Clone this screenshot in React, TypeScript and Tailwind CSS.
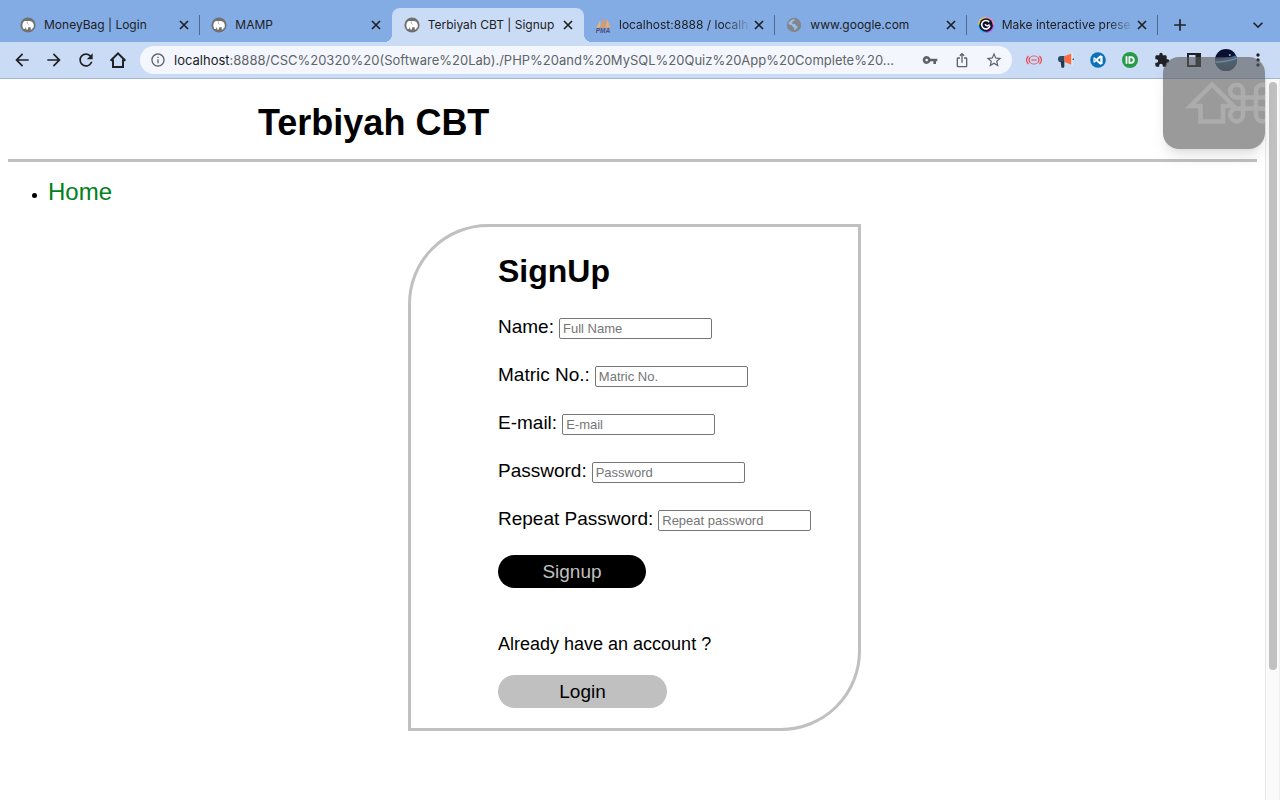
import type { ReactNode } from 'react';
import {
  MdAdd,
  MdArrowBack,
  MdArrowForward,
  MdExpandMore,
  MdExtension,
  MdInfoOutline,
  MdIosShare,
  MdMoreVert,
  MdRefresh,
  MdStarBorder,
  MdVpnKey,
} from 'react-icons/md';

function ElephantIcon() {
  return (
    <svg viewBox="0 0 16 16" className="size-4 shrink-0" aria-hidden="true">
      <circle cx="8" cy="8" r="7.600" fill="#707070" />
      <path
        d="M3.500 12C2.200 10.500 1.900 7 3.200 5.200 4.200 3.800 6 3.700 7.200 4.300c1.500-.7 3.600-.5 4.900.5 1.600 1.300 2 3.500 1.500 5.400-.2.900-.9 1-1 .2-.2.600-.3 1.200-.3 2h-1.600c0-1 0-1.800-.3-2.300-.6.300-1.500.3-2.100.1-.3.500-.3 1.200-.3 2.200H6.200c0-.9-.1-1.800-.5-2.500-.4.500-.5 1.200-.6 2.100z"
        fill="#fff"
      />
      <path d="M7.300 4.600c-.1 1.200.3 2.300 1.200 2.900" fill="none" stroke="#8a8a8a" strokeWidth=".7" />
    </svg>
  );
}

function SailIcon() {
  return (
    <svg viewBox="0 0 16 16" className="size-4 shrink-0" aria-hidden="true">
      <path d="M1 10.500C3 8.500 4.500 5.500 5 2.500c.6 3 .5 6-.2 8z" fill="#f7b56b" />
      <path d="M5.600 10.500C7.500 7.500 8.600 4 8.800.600c1.400 3.200 1.500 7 .6 9.900z" fill="#f9943a" />
      <path d="M10.300 10.500c1-2 1.400-4.900 1.100-8.500 2 2.800 3.200 5.700 3.600 8.500z" fill="#f9a660" />
      <text x="8" y="15.500" fontSize="6.500" fontWeight="700" fontStyle="italic" textAnchor="middle" fill="#4b4f78" fontFamily="Liberation Sans, sans-serif">
        PMA
      </text>
    </svg>
  );
}

function GlobeIcon() {
  return (
    <svg viewBox="0 0 16 16" className="size-4 shrink-0" aria-hidden="true">
      <circle cx="8" cy="8" r="7.200" fill="#80868b" />
      <path
        d="M8.500 2.200c.3 1.200-.2 1.800-1.400 2-.6.100-.5 1-.9 1.300-.7.400-.3 1.200.5 1.300 1.400.1 2.600.1 2.900 1.300.3.900 1.300.6 1.800 1.300.4.600-.2 1.500-.8 2-.9.700-1.300 1.600-2.300 1.900-.4-.9.200-1.900-.3-2.600-.8-.5-1.300-1-1.700-2C5.500 8 4 7.700 2.400 7.200 2.700 4.500 5.500 2.200 8.500 2.200z"
        fill="#9cbbe6"
      />
    </svg>
  );
}

function PresentIcon() {
  return (
    <svg viewBox="0 0 16 16" className="size-4 shrink-0" aria-hidden="true">
      <path d="M8 0a8 8 0 0 1 8 8H8z" fill="#f58ab0" />
      <path d="M16 8a8 8 0 0 1-8 8V8z" fill="#c04de0" />
      <path d="M8 16a8 8 0 0 1-8-8h8z" fill="#35b6f2" />
      <path d="M0 8a8 8 0 0 1 8-8v8z" fill="#f0c64a" />
      <circle cx="8" cy="8" r="6.800" fill="#101330" />
      <path d="M11.200 5.100A4.200 4.200 0 1 0 12 8.600" fill="none" stroke="#fff" strokeWidth="1.600" />
      <path d="M7.200 7.200c.4 2 3 2.300 4.300.3" fill="none" stroke="#fff" strokeWidth="1.500" />
    </svg>
  );
}

function CloseIcon() {
  return (
    <svg viewBox="0 0 10 10" className="size-2.5" fill="none" stroke="#202124" strokeWidth="1.700" aria-hidden="true">
      <path d="M1 1l8 8M9 1 1 9" />
    </svg>
  );
}

function HomeIcon() {
  return (
    <svg viewBox="0 0 20 20" className="size-5" fill="none" stroke="#202124" strokeWidth="2" aria-hidden="true">
      <path d="M2.600 10.700 10 3.300l7.400 7.400M5 9.500V17h10V9.500" />
    </svg>
  );
}

function BroadcastIcon() {
  return (
    <svg viewBox="0 0 16 16" className="size-4" fill="none" stroke="#e8454f" strokeLinecap="round" aria-hidden="true">
      <path d="M2.200 4.300c-2 2.200-2 5.200 0 7.400M13.800 4.300c2 2.200 2 5.200 0 7.400M4 5.700c-1.200 1.400-1.200 3.200 0 4.600M12 5.700c1.200 1.400 1.200 3.200 0 4.600" strokeWidth="1.200" />
      <path d="M5 4.700c1.900-1.100 4.100-1.100 6 0M5 11.300c1.900 1.100 4.100 1.100 6 0" strokeWidth=".8" />
      <path d="M5.600 8h4.800" strokeWidth="1.600" strokeDasharray="1.200 .6" strokeLinecap="butt" />
    </svg>
  );
}

function MegaphoneIcon() {
  return (
    <svg viewBox="0 0 16 16" className="size-4" aria-hidden="true">
      <path d="M0 7.200C0 5 1 4 3 4h3.500v6H3C1 10 0 9.200 0 7.200z" fill="#2f4a63" />
      <path d="M2.500 9h3.800v5.500c0 1-.6 1.300-1.400 1.300H3.500z" fill="#22384d" />
      <path d="M6.500 4 13.500 1.500v11.300L6.500 10z" fill="#ff6b3d" />
      <path d="M13.500.800h1.100v12.800h-1.100z" fill="#e9eef2" />
      <circle cx="15.200" cy="7.200" r=".8" fill="#22384d" />
    </svg>
  );
}

function CodeIcon() {
  return (
    <svg viewBox="0 0 16 16" className="size-4" aria-hidden="true">
      <circle cx="8" cy="8" r="7.800" fill="#0b72b9" />
      <path d="M10.300 3.200 12.600 4.200v7.600l-2.300 1L6.200 9.300 4.400 10.700l-1-.5V5.800l1-.5 1.800 1.400zM10.300 5.900 7.700 8l2.600 2.100zM4.500 6.900v2.200L5.500 8z" fill="#fff" fillRule="evenodd" />
    </svg>
  );
}

function GreenIcon() {
  return (
    <svg viewBox="0 0 16 16" className="size-4" aria-hidden="true">
      <circle cx="8" cy="8" r="8" fill="#259b48" />
      <path d="M4.500 4.200v7.600" stroke="#fff" strokeWidth="1.800" />
      <path d="M7.400 5.100h1.500a2.900 2.900 0 0 1 0 5.800H7.400z" fill="none" stroke="#fff" strokeWidth="1.800" />
    </svg>
  );
}

function SidePanelIcon() {
  return (
    <svg viewBox="0 0 14 14" className="size-3.5" aria-hidden="true">
      <path d="M0 0h14v14H0zM2 2v10h6.500V2z" fill="#202124" fillRule="evenodd" />
    </svg>
  );
}

function AvatarIcon() {
  return (
    <svg viewBox="0 0 22 22" className="size-[22px]" aria-hidden="true">
      <defs>
        <clipPath id="avatar-clip">
          <circle cx="11" cy="11" r="11" />
        </clipPath>
        <linearGradient id="avatar-sea" x1="0" y1="0" x2="0" y2="1">
          <stop offset="0" stopColor="#2f77b5" />
          <stop offset="1" stopColor="#3d5468" />
        </linearGradient>
      </defs>
      <g clipPath="url(#avatar-clip)">
        <path d="M0 0h22v22H0z" fill="#0a1030" />
        <path d="M0 9.500C8 10 15 8.500 22 6v16H0z" fill="url(#avatar-sea)" />
        <path d="M0 12.500C8 12.500 15 11 22 8.500v1.200C15 12.500 8 13.700 0 13.700z" fill="#b5dcf0" />
        <circle cx="14.800" cy="6" r="1" fill="#8db8e8" />
      </g>
    </svg>
  );
}

interface TabProps {
  title: string;
  icon: ReactNode;
  active?: boolean;
  divider?: boolean;
  fade?: boolean;
}

function Tab({ title, icon, active, divider, fade }: TabProps) {
  return (
    <div
      className={
        active
          ? 'relative flex min-w-0 flex-1 items-center rounded-t-lg bg-[#cadbf5] pr-2 pl-3'
          : 'relative flex min-w-0 flex-1 items-center pr-2 pl-[11px]'
      }
    >
      {active && (
        <>
          <span className="absolute bottom-0 -left-2 size-2 bg-[radial-gradient(circle_at_0_0,transparent_8px,#cadbf5_8px)]" />
          <span className="absolute -right-2 bottom-0 size-2 bg-[radial-gradient(circle_at_100%_0,transparent_8px,#cadbf5_8px)]" />
        </>
      )}
      {icon}
      <span
        className={
          fade
            ? 'ml-2 min-w-0 flex-1 overflow-hidden mask-r-from-80% text-xs whitespace-nowrap'
            : 'ml-2 min-w-0 flex-1 text-xs whitespace-nowrap'
        }
      >
        {title}
      </span>
      <button type="button" aria-label={`Close ${title}`} className="flex size-4 shrink-0 items-center justify-center">
        <CloseIcon />
      </button>
      {divider && <span className="absolute top-[7px] right-0 h-5 w-px bg-[#4f6a91]" />}
    </div>
  );
}

function ToolButton({ label, children }: { label: string; children: ReactNode }) {
  return (
    <button type="button" aria-label={label} className="flex h-7 w-8 shrink-0 items-center justify-center">
      {children}
    </button>
  );
}

function Field({ id, label, placeholder, type }: { id: string; label: string; placeholder: string; type: string }) {
  return (
    <div className="flex h-6 items-baseline gap-[5px] text-[19px] leading-6">
      <label htmlFor={id} className="whitespace-nowrap">
        {label}
      </label>
      <input
        id={id}
        type={type}
        placeholder={placeholder}
        className="h-[21px] w-[153px] rounded-xs border border-[#767676] bg-white px-[3px] text-[13px] leading-4 placeholder:text-[#757575]"
      />
    </div>
  );
}

export default function App() {
  return (
    <div className="relative flex min-h-screen flex-col overflow-hidden bg-white text-black">
      <header className="font-[Inter,sans-serif] text-[#202124]">
        <div className="flex h-[42px] bg-[#83ace5] pt-2">
          <div className="flex min-w-0 flex-1 pl-[9px]">
            <Tab title="MoneyBag | Login" icon={<ElephantIcon />} divider />
            <Tab title="MAMP" icon={<ElephantIcon />} />
            <Tab title="Terbiyah CBT | Signup" icon={<ElephantIcon />} active />
            <Tab title="localhost:8888 / localh" icon={<SailIcon />} divider fade />
            <Tab title="www.google.com" icon={<GlobeIcon />} divider />
            <Tab title="Make interactive prese" icon={<PresentIcon />} divider fade />
          </div>
          <div className="flex w-[122px] items-center justify-between px-3">
            <button type="button" aria-label="New tab">
              <MdAdd className="size-5" />
            </button>
            <button type="button" aria-label="Search tabs">
              <MdExpandMore className="size-5" />
            </button>
          </div>
        </div>

        <div className="flex h-[37px] items-center border-b border-[#a3b4d4] bg-[#cadbf5] px-1.5">
          <ToolButton label="Back">
            <MdArrowBack className="size-5" />
          </ToolButton>
          <ToolButton label="Forward">
            <MdArrowForward className="size-5" />
          </ToolButton>
          <ToolButton label="Reload">
            <MdRefresh className="size-5" />
          </ToolButton>
          <ToolButton label="Home page">
            <HomeIcon />
          </ToolButton>
          <div className="mx-1.5 flex h-7 min-w-0 flex-1 items-center rounded-full bg-[#f3f7fd] px-0.5 text-[#5f6368]">
            <ToolButton label="Site information">
              <MdInfoOutline className="size-4" />
            </ToolButton>
            <span className="min-w-0 flex-1 overflow-hidden text-[13px] leading-5 whitespace-nowrap">
              <span className="text-[#202124]">localhost</span>
              :8888/CSC%20320%20(Software%20Lab)./PHP%20and%20MySQL%20Quiz%20App%20Complete%20...
            </span>
            <ToolButton label="Saved passwords">
              <MdVpnKey className="size-4" />
            </ToolButton>
            <ToolButton label="Share">
              <MdIosShare className="size-4" />
            </ToolButton>
            <ToolButton label="Bookmark">
              <MdStarBorder className="size-[18px]" />
            </ToolButton>
          </div>
          <ToolButton label="Broadcast">
            <BroadcastIcon />
          </ToolButton>
          <ToolButton label="Announcements">
            <MegaphoneIcon />
          </ToolButton>
          <ToolButton label="Code editor">
            <CodeIcon />
          </ToolButton>
          <ToolButton label="Reader">
            <GreenIcon />
          </ToolButton>
          <ToolButton label="Extensions">
            <MdExtension className="size-4" />
          </ToolButton>
          <ToolButton label="Side panel">
            <SidePanelIcon />
          </ToolButton>
          <ToolButton label="Profile">
            <AvatarIcon />
          </ToolButton>
          <ToolButton label="Menu">
            <MdMoreVert className="size-5" />
          </ToolButton>
        </div>
      </header>

      <div className="flex flex-1">
        <main className="min-w-0 flex-1 px-2 pb-8 font-['Liberation_Sans',Arial,sans-serif]">
          <div className="border-b-[3px] border-[#c0c0c0] pt-6 pb-4 pl-[250px]">
            <h1 className="text-4xl font-bold">Terbiyah CBT</h1>
          </div>
          <nav className="pt-4">
            <ul className="list-disc pl-10">
              <li className="leading-7">
                <a href="#home" className="text-2xl leading-7 text-[#008020]">
                  Home
                </a>
              </li>
            </ul>
          </nav>

          <section className="mt-[15px] ml-[400px] w-[453px] rounded-tl-[80px] rounded-br-[80px] border-[3px] border-[#c0c0c0] pt-[26px] pb-5 pl-[87px]">
            <h2 className="text-[32px] leading-9 font-bold">SignUp</h2>
            <form className="mt-[26px] flex flex-col items-start gap-6" onSubmit={(event) => event.preventDefault()}>
              <Field id="name" label="Name:" placeholder="Full Name" type="text" />
              <Field id="matric" label="Matric No.:" placeholder="Matric No." type="text" />
              <Field id="email" label="E-mail:" placeholder="E-mail" type="email" />
              <Field id="password" label="Password:" placeholder="Password" type="password" />
              <Field id="repeat" label="Repeat Password:" placeholder="Repeat password" type="password" />
              <button type="submit" className="h-[33px] w-[148px] rounded-full bg-black text-[19px] leading-6 text-[#c0c0c0]">
                Signup
              </button>
            </form>
            <p className="mt-11 text-lg leading-6">Already have an account ?</p>
            <a
              href="#login"
              className="mt-[19px] flex h-[33px] w-[169px] items-center justify-center rounded-full bg-[#c0c0c0] text-[19px] leading-6"
            >
              Login
            </a>
          </section>
        </main>

        <div className="flex w-[15px] flex-col border-x border-l-[#e8e8e8] border-r-[#efefef] bg-[#fafafa] px-[3px] pt-[3px]" aria-hidden="true">
          <div className="w-2 flex-[588] rounded-full bg-[#c1c1c1]" />
          <div className="flex-[130]" />
        </div>
      </div>

      <div className="absolute top-[57px] right-[15px] h-[92px] w-[102px] overflow-hidden rounded-2xl bg-[#5c5c5c]/62 shadow-lg">
        <svg viewBox="0 0 102 92" className="h-full w-full" fill="none" stroke="#acacac" aria-hidden="true">
          <path d="M49 27.500 27.500 49h10V64.500h22.500V49H70.500z" strokeWidth="4.500" />
          <path
            d="M80 40.500V34a6.400 6.400 0 1 0-6.400 6.500H99.600A6.400 6.400 0 1 0 93 34V58a6.400 6.400 0 1 0 6.600-6.400H73.600A6.400 6.400 0 1 0 80 58V40"
            strokeWidth="4.500"
          />
        </svg>
      </div>
    </div>
  );
}
